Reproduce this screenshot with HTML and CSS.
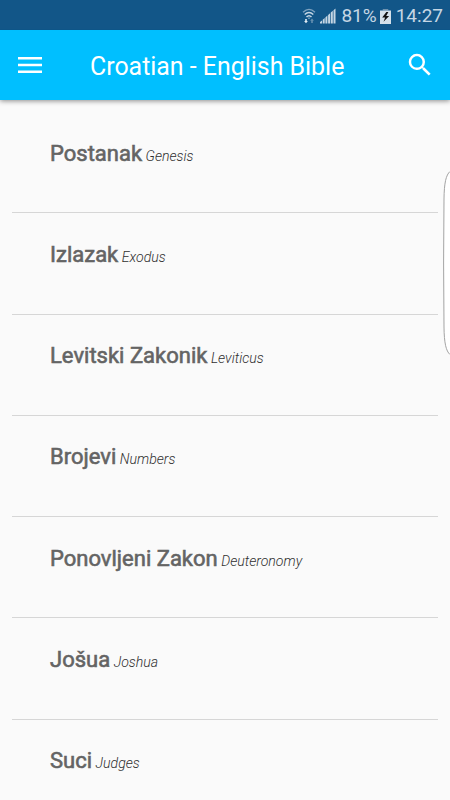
FILE: index.html
```html
<!DOCTYPE html>
<html lang="hr">
<head>
<meta charset="utf-8">
<title>Croatian - English Bible</title>
<link rel="stylesheet" href="styles.css">
</head>
<body>
<header class="top">
  <div class="status">
    <svg class="wifi" width="14" height="16" viewBox="0 0 14 16" fill="none" stroke="#c5d6e4">
      <path d="M1 4.2Q7-1.5 13 4.2" stroke="#7fa3c0" stroke-width="1.3"/>
      <path d="M2.7 6.6Q7 2.3 11.3 6.6" stroke-width="1.4"/>
      <path d="M4.5 9Q7 6.4 9.5 9" stroke-width="1.5"/>
      <path d="M5.8 9.7h2.4L7 11z" fill="#c5d6e4" stroke="none"/>
      <path d="M3.2 11h1.6v2h1.1L4 15.2 2.1 13h1.1z" fill="#e3edf4" stroke="none"/>
      <path d="M9.2 15v-2.2H8.1L10 10.6l1.9 2.2h-1.1V15z" fill="#6690b1" stroke="none"/>
    </svg>
    <svg class="signal" width="16" height="16" viewBox="0 0 16 16" fill="#c5d6e4">
      <path d="M0 15.500V14l2-1.600v3.100zM2.700 15.500v-3.700l2-1.700v5.400zM5.400 15.500V9.400l2-1.800v7.900zM8.100 15.500V7l2-1.800v10.300zM10.800 15.500V4.600l2-1.800v12.700zM13.500 15.500V2.200l2-1.800v15.100z"/>
    </svg>
    <span class="percent">81%</span>
    <svg class="battery" width="11" height="15" viewBox="0 0 10 15" preserveAspectRatio="none">
      <path d="M2.5 0h5v1.5h-5z" fill="#6f93b0"/>
      <path d="M0 1.5h10V15H0z" fill="#d5e1ea"/>
      <path d="M5.8 3L2 8.500h2.700L3.200 12.800 8.300 7H5.600L7.600 3z" fill="#111"/>
    </svg>
    <span class="clock">14:27</span>
  </div>
  <div class="bar">
    <svg class="menu" width="24" height="16" viewBox="0 0 24 16" fill="#fff">
      <path d="M0 0h24v2.6H0zM0 6.7h24v2.6H0zM0 13.4h24V16H0z"/>
    </svg>
    <h1 class="title">Croatian - English Bible</h1>
    <svg class="search" width="30" height="30" viewBox="0 0 24 24" fill="#fff">
      <path d="M15.5 14h-.79l-.28-.27A6.471 6.471 0 0 0 16 9.5 6.5 6.5 0 1 0 9.5 16c1.61 0 3.09-.59 4.23-1.57l.27.28v.79l5 4.99L20.49 19l-4.99-5zm-6 0C7.01 14 5 11.99 5 9.5S7.01 5 9.5 5 14 7.01 14 9.5 11.99 14 9.5 14z"/>
    </svg>
  </div>
</header>
<main class="list">
  <div class="row"><span class="name">Postanak</span><em class="sub">Genesis</em></div>
  <div class="row"><span class="name">Izlazak</span><em class="sub">Exodus</em></div>
  <div class="row"><span class="name">Levitski Zakonik</span><em class="sub">Leviticus</em></div>
  <div class="row"><span class="name">Brojevi</span><em class="sub">Numbers</em></div>
  <div class="row"><span class="name">Ponovljeni Zakon</span><em class="sub">Deuteronomy</em></div>
  <div class="row"><span class="name">Jošua</span><em class="sub">Joshua</em></div>
  <div class="row"><span class="name">Suci</span><em class="sub">Judges</em></div>
</main>
<svg class="edge" width="7" height="184" viewBox="0 0 7 184">
  <path d="M7.5 .5C3 4 1.2 12 1 28L.6 92 1 156C1.2 172 3 180 7.5 183.5z" fill="#fff"/>
  <path d="M7 .5C3 4 1.2 12 1 28L.6 92 1 156C1.2 172 3 180 7 183.5" fill="none" stroke="#999" stroke-width=".9"/>
</svg>
</body>
</html>
```
FILE: styles.css
```css
body {
  margin: 0;
  height: 800px;
  overflow: hidden;
  position: relative;
  background: #fafafa;
  font-family: Roboto, sans-serif;
}

.top {
  height: 100px;
  background: #00bfff;
  box-shadow: 0 1px 5px rgba(0, 0, 0, .45);
}

.status {
  display: flex;
  justify-content: flex-end;
  align-items: center;
  box-sizing: border-box;
  height: 30px;
  padding: 3px 7px 0 0;
  background: #125688;
  border-bottom: 1px solid #0d5588;
  color: #c5d6e4;
  font-size: 19px;
  line-height: 26px;
}

.signal { margin: 0 5px 0 4px; }
.battery { margin: 0 5px 0 3px; }

.bar {
  display: flex;
  align-items: center;
  height: 70px;
  padding: 0 15px 0 18px;
}

.title {
  flex: 1;
  margin: 2px 0 0 48px;
  color: #fff;
  font-size: 24.9px;
  font-weight: 400;
  white-space: nowrap;
}

.list {
  display: flex;
  flex-direction: column;
  padding: 12px 12px 0;
}

.row {
  display: flex;
  align-items: baseline;
  flex: none;
  box-sizing: border-box;
  height: 101.3px;
  padding: 28.5px 38px 0;
  border-bottom: 1px solid #d6d6d6;
  line-height: 26px;
  white-space: nowrap;
}

.name {
  color: #646464;
  font-size: 22px;
  -webkit-text-stroke: .6px #646464;
}

.sub {
  margin-left: 3.5px;
  color: #303030;
  font-size: 14.1px;
  font-weight: 300;
}

.edge {
  position: absolute;
  top: 171px;
  right: 0;
}
```
